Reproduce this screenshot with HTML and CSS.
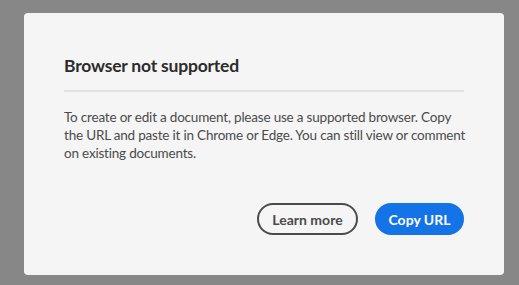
FILE: index.html
```html
<!DOCTYPE html>
<html lang="en">
<head>
<meta charset="utf-8">
<title>Browser not supported</title>
<link rel="stylesheet" href="styles.css">
</head>
<body>
<div class="overlay">
  <section class="dialog" role="dialog" aria-labelledby="dlg-title">
    <h2 id="dlg-title" class="dialog-title">Browser not supported</h2>
    <hr class="divider">
    <p class="dialog-text">To create or edit a document, please use a supported browser. Copy the URL and paste it in Chrome or Edge. You can still view or comment on existing documents.</p>
    <div class="actions">
      <button class="btn btn-secondary" type="button">Learn more</button>
      <button class="btn btn-primary" type="button">Copy URL</button>
    </div>
  </section>
</div>
</body>
</html>
```

FILE: styles.css
```css
* { box-sizing: border-box; }
html, body { margin: 0; height: 100%; }
body {
  background: #878787;
  font-family: Lato, "Open Sans", sans-serif;
}
.overlay {
  padding: 13px 15px 10px 24px;
  height: 100%;
  display: flex;
}
.dialog {
  flex: 1;
  background: #f5f5f5;
  border-radius: 4px;
  padding: 40px 40px 0 40px;
  display: flex;
  flex-direction: column;
}
.dialog-title {
  margin: 0;
  font-size: 17.5px;
  letter-spacing: -0.2px;
  line-height: 26px;
  font-weight: 700;
  color: #2c2c2c;
}
.divider {
  margin: 11px 0 0 0;
  border: 0;
  height: 2px;
  background: #e1e1e1;
}
.dialog-text {
  margin: 16px -6px 0 0;
  font-size: 13.5px;
  letter-spacing: -0.2px;
  line-height: 18px;
  color: #4b4b4b;
}
.actions {
  margin-top: 41px;
  display: flex;
  justify-content: flex-end;
  gap: 17px;
}
.btn {
  height: 32px;
  border-radius: 16px;
  font-family: inherit;
  font-size: 14px;
  font-weight: 700;
  padding: 0;
  white-space: nowrap;
  cursor: pointer;
}
.btn-secondary {
  width: 101px;
  background: transparent;
  border: 2px solid #4b4b4b;
  color: #4b4b4b;
}
.btn-primary {
  width: 89px;
  background: #1473e6;
  border: 2px solid #1473e6;
  color: #fff;
}
```
